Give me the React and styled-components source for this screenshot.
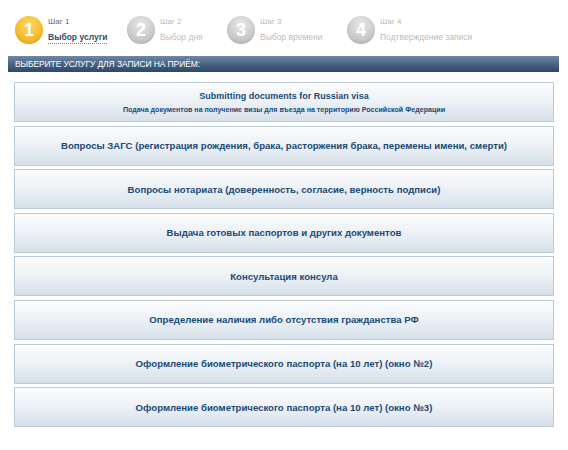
import styled, { createGlobalStyle } from "styled-components";

const GlobalStyle = createGlobalStyle`
body {
  margin: 0;
  background: #ffffff;
  font-family: "Liberation Sans", Arial, sans-serif;
}
`

const Page = styled.div`
width: 568px;
height: 450px;
padding: 16px 9px 0 8px;
box-sizing: border-box;
`

const Steps = styled.div`
display: flex;
align-items: center;
padding-left: 7px;
height: 28px;
`

const Step = styled.div`
display: flex;
align-items: center;
gap: 5px;
width: ${(props) => props.width}px;
`

const Circle = styled.div`
width: 28px;
height: 28px;
flex-shrink: 0;
border-radius: 50%;
display: flex;
align-items: center;
justify-content: center;
color: #ffffff;
font-size: 18px;
font-weight: 700;
background: ${(props) => props.active
  ? "radial-gradient(circle at 50% 30%, #fcd867 0%, #f6bd2e 55%, #eda51a 100%)"
  : "radial-gradient(circle at 50% 30%, #e9e9e9 0%, #cccccc 55%, #b3b3b3 100%)"};
box-shadow: inset 0 -1px 2px rgba(0, 0, 0, 0.08);
`

const StepText = styled.div`
display: flex;
flex-direction: column;
align-items: flex-start;
gap: 6px;
`

const StepNum = styled.span`
font-size: 8px;
color: ${(props) => props.active ? "#5a6a7c" : "#b9b9b9"};
`

const StepName = styled.span`
font-size: 8.5px;
white-space: nowrap;
font-weight: ${(props) => props.active ? 700 : 400};
color: ${(props) => props.active ? "#34506e" : "#bdbdbd"};
border-bottom: ${(props) => props.active ? "1px dotted #6f86a0" : "none"};
padding-bottom: ${(props) => props.active ? "1px" : "2px"};
`

const Header = styled.div`
margin-top: 12px;
height: 16px;
display: flex;
align-items: center;
padding-left: 7px;
background: linear-gradient(to bottom, #7088a3 0%, #4a6383 50%, #2f4767 100%);
color: #ffffff;
font-size: 8.5px;
text-transform: uppercase;
letter-spacing: -0.1px;
`

const List = styled.div`
display: flex;
flex-direction: column;
gap: 3.6px;
padding: 10px 5px 0 6px;
`

const Card = styled.div`
height: 40px;
box-sizing: border-box;
border: 1px solid #bccad7;
background: linear-gradient(to bottom, #fbfcfd 0%, #eef2f6 45%, #d6e0ea 100%);
display: flex;
flex-direction: column;
align-items: center;
justify-content: center;
gap: 5px;
color: #1b4a76;
font-weight: 700;
text-align: center;
`

const Title = styled.span`
font-size: ${(props) => props.big ? "9px" : "9.6px"};
`

const Sub = styled.span`
font-size: 7.1px;
`

const steps = [
  { n: 1, name: "Выбор услуги", width: 112 },
  { n: 2, name: "Выбор дня", width: 100 },
  { n: 3, name: "Выбор времени", width: 120 },
  { n: 4, name: "Подтверждение записи", width: 120 },
]

const services = [
  "Вопросы ЗАГС (регистрация рождения, брака, расторжения брака, перемены имени, смерти)",
  "Вопросы нотариата (доверенность, согласие, верность подписи)",
  "Выдача готовых паспортов и других документов",
  "Консультация консула",
  "Определение наличия либо отсутствия гражданства РФ",
  "Оформление биометрического паспорта (на 10 лет) (окно №2)",
  "Оформление биометрического паспорта (на 10 лет) (окно №3)",
]

const App = () => {
  return (
    <Page>
      <GlobalStyle />
      <Steps>
        {steps.map((s) => (
          <Step key={s.n} width={s.width}>
            <Circle active={s.n === 1}>{s.n}</Circle>
            <StepText>
              <StepNum active={s.n === 1}>Шаг {s.n}</StepNum>
              <StepName active={s.n === 1}>{s.name}</StepName>
            </StepText>
          </Step>
        ))}
      </Steps>
      <Header>Выберите услугу для записи на приём:</Header>
      <List>
        <Card>
          <Title big>Submitting documents for Russian visa</Title>
          <Sub>Подача документов на получение визы для въезда на территорию Российской Федерации</Sub>
        </Card>
        {services.map((s) => (
          <Card key={s}>
            <Title>{s}</Title>
          </Card>
        ))}
      </List>
    </Page>
  )
}

export default App;
